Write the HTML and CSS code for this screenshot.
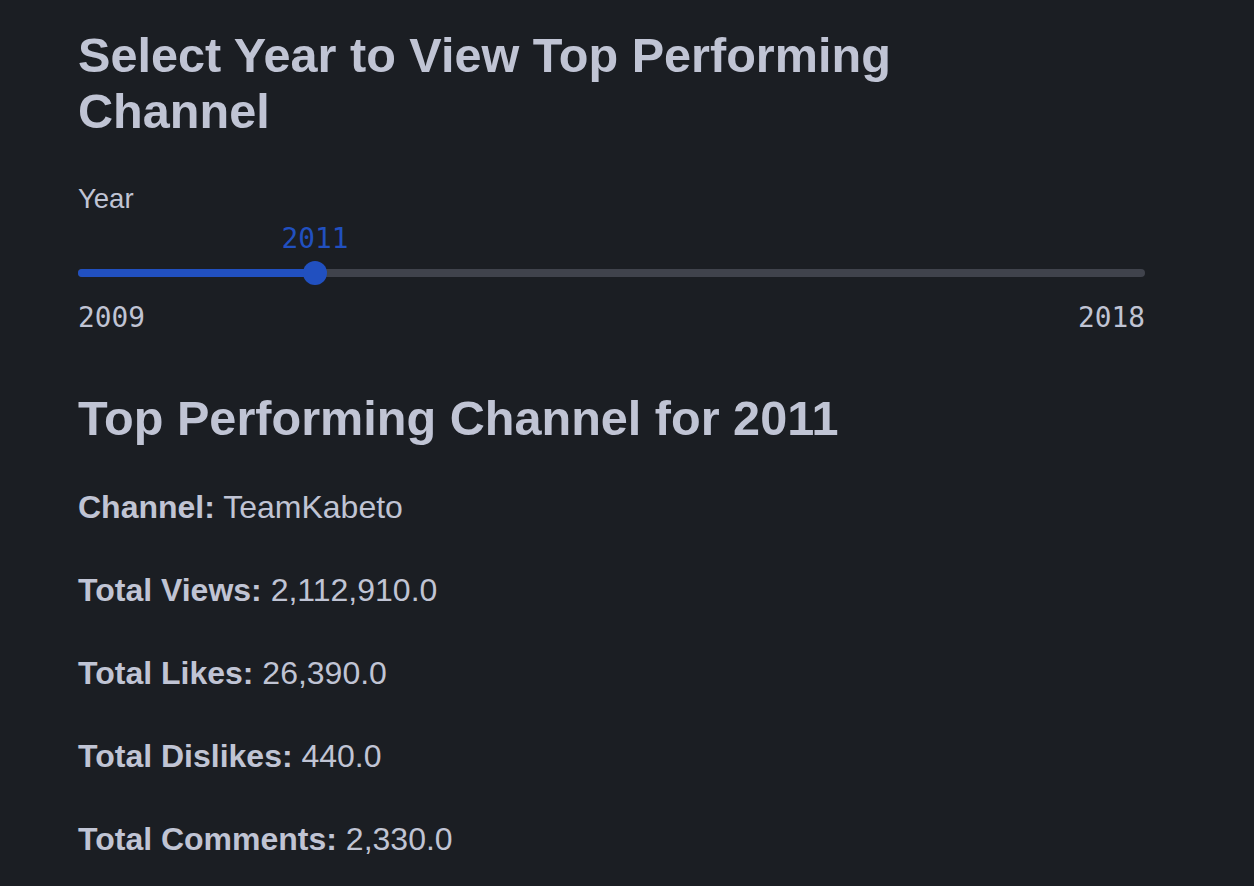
FILE: index.html
```html
<!DOCTYPE html>
<html>
<head>
<meta charset="utf-8">
<link rel="stylesheet" href="styles.css">
</head>
<body>
<main class="page">
  <h1 class="title">Select Year to View Top Performing Channel</h1>
  <div class="field">
    <div class="label">Year</div>
    <div class="slider">
      <div class="value-row">
        <span class="value" style="left: 22.22%">2011</span>
      </div>
      <div class="track-area">
        <div class="track">
          <div class="fill" style="width: 22.22%"></div>
          <div class="thumb" style="left: 22.22%"></div>
        </div>
      </div>
      <div class="ticks">
        <span>2009</span>
        <span>2018</span>
      </div>
    </div>
  </div>
  <h2 class="subtitle">Top Performing Channel for 2011</h2>
  <div class="stats">
    <p class="stat"><strong>Channel:</strong> TeamKabeto</p>
    <p class="stat"><strong>Total Views:</strong> 2,112,910.0</p>
    <p class="stat"><strong>Total Likes:</strong> 26,390.0</p>
    <p class="stat"><strong>Total Dislikes:</strong> 440.0</p>
    <p class="stat"><strong>Total Comments:</strong> 2,330.0</p>
  </div>
</main>
</body>
</html>
```
FILE: styles.css
```css
html, body {
  margin: 0;
  padding: 0;
  background: #1b1e23;
}
body {
  font-family: "Liberation Sans", Arial, Helvetica, sans-serif;
  color: #c0c4d4;
}
.page {
  width: 1067px;
  padding: 27px 0 0 78px;
  display: flex;
  flex-direction: column;
}
.title {
  margin: 0;
  max-width: 900px;
  font-size: 48.6px;
  line-height: 56px;
  font-weight: 700;
}
.field {
  margin-top: 44px;
  display: flex;
  flex-direction: column;
}
.label {
  font-size: 27.5px;
  line-height: 32px;
}
.slider {
  display: flex;
  flex-direction: column;
  margin-top: 8px;
}
.value-row {
  position: relative;
  height: 32px;
}
.value {
  position: absolute;
  top: 0;
  transform: translateX(-50%);
  font-family: "DejaVu Sans Mono", monospace;
  font-size: 27.8px;
  line-height: 32px;
  color: #2150c0;
}
.track-area {
  height: 24px;
  margin-top: 6px;
  display: flex;
  align-items: center;
}
.track {
  position: relative;
  flex: 1;
  height: 8px;
  border-radius: 4px;
  background: #40434c;
}
.fill {
  height: 100%;
  border-radius: 4px;
  background: #2150c0;
}
.thumb {
  position: absolute;
  top: 50%;
  width: 24px;
  height: 24px;
  border-radius: 50%;
  background: #2150c0;
  transform: translate(-50%, -50%);
}
.ticks {
  margin-top: 17px;
  display: flex;
  justify-content: space-between;
  font-family: "DejaVu Sans Mono", monospace;
  font-size: 27.8px;
  line-height: 32px;
  color: #c0c4d4;
}
.subtitle {
  margin: 56px 0 0;
  font-size: 48.6px;
  line-height: 56px;
  font-weight: 700;
}
.stats {
  margin-top: 36px;
  display: flex;
  flex-direction: column;
  gap: 33px;
}
.stat {
  margin: 0;
  font-size: 32px;
  line-height: 50px;
}
.stat strong {
  font-weight: 700;
}
```
